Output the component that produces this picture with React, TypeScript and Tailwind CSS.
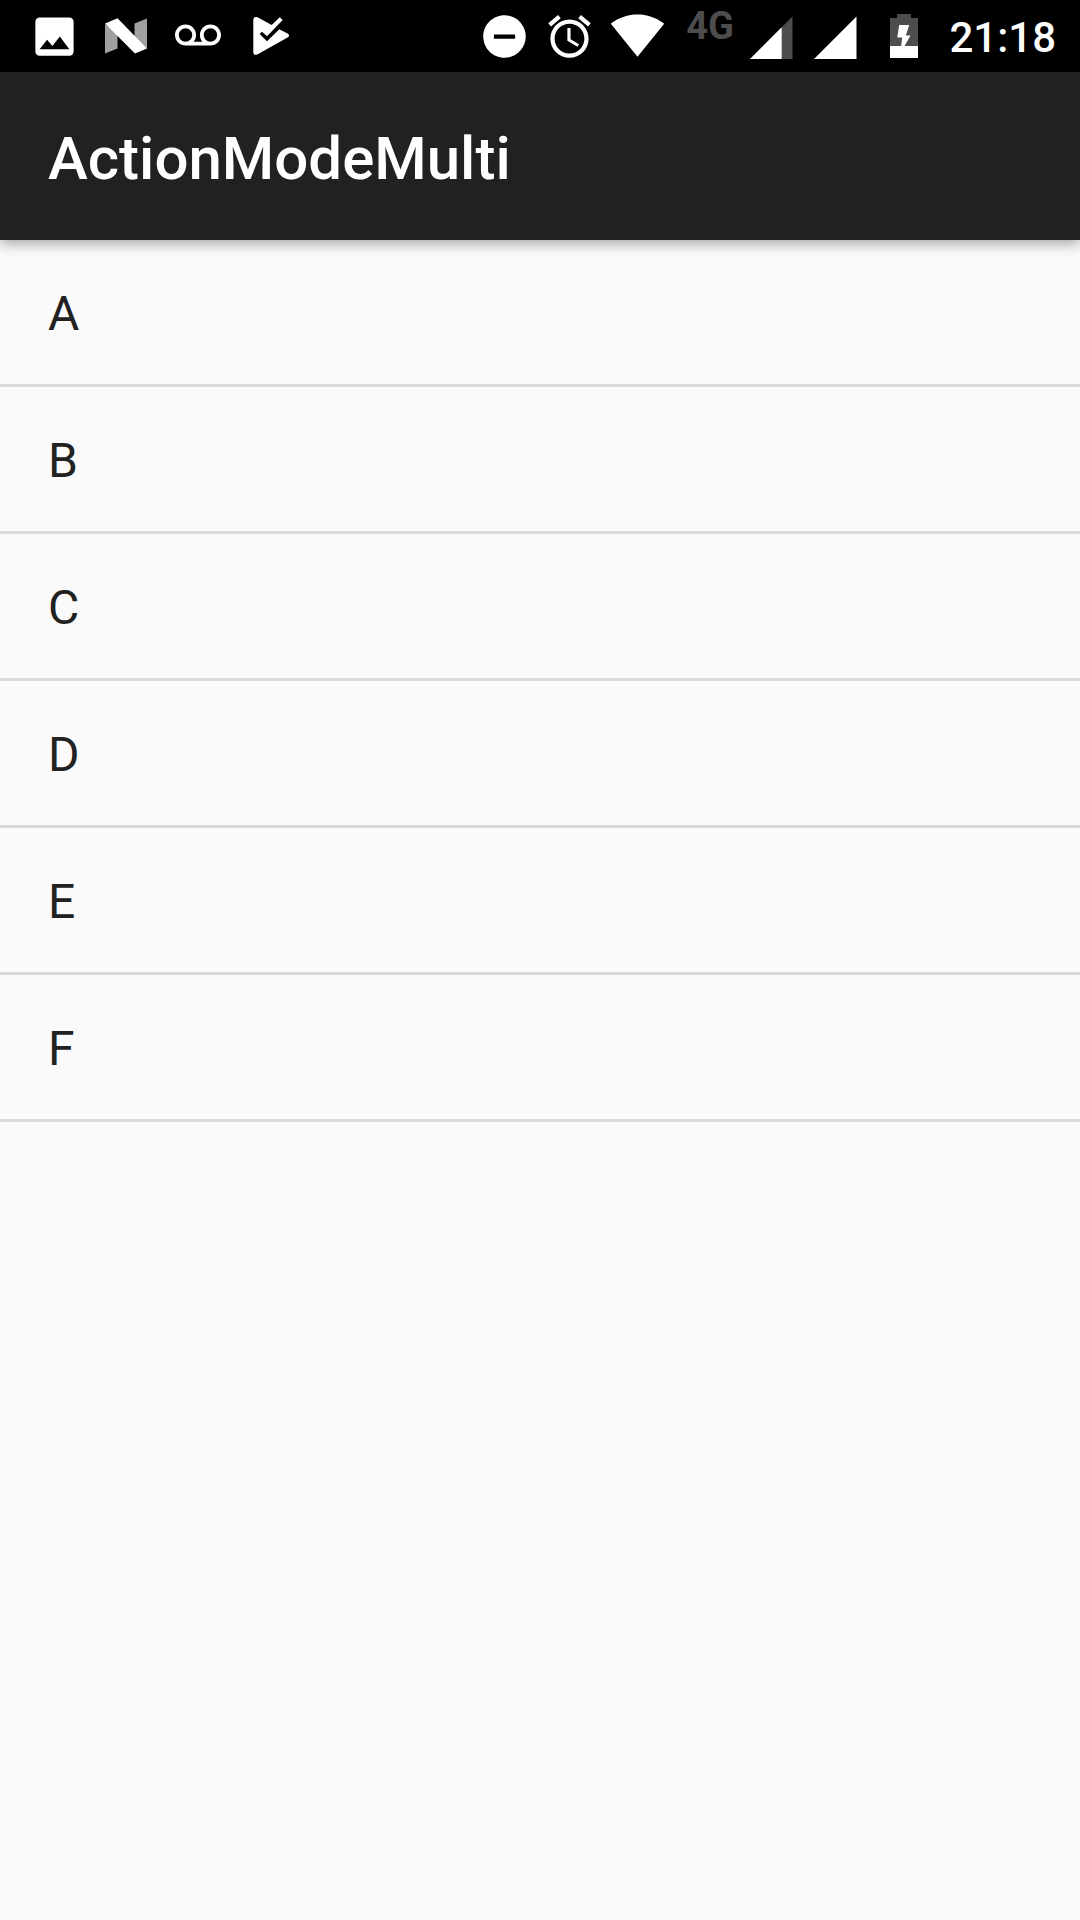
import React from "react";

const ROWS = ["A", "B", "C", "D", "E", "F"];

function PictureIcon() {
  return (
    <svg className="size-[51px]" viewBox="0 0 24 24" fill="currentColor" aria-hidden="true">
      <path d="M21 19V5c0-1.1-.9-2-2-2H5c-1.1 0-2 .9-2 2v14c0 1.1.9 2 2 2h14c1.1 0 2-.9 2-2zM8.5 13.5l2.5 3.01L14.5 12l4.5 6H5l3.5-4.5z" />
    </svg>
  );
}

function NougatIcon() {
  return (
    <svg className="size-[72px]" viewBox="0 0 72 72" aria-hidden="true">
      <path d="M15 24l12.500 10V48.500L15 53.500zM57 18.500L44.500 23.500V38L57 48.500z" fill="#a0a0a0" />
      <path d="M15 23.500L27.500 18.300 57 48.500 45 53.500z" fill="#fff" />
    </svg>
  );
}

function VoicemailIcon() {
  return (
    <svg className="size-[46px]" viewBox="0 0 24 24" fill="currentColor" aria-hidden="true">
      <path d="M18.5 6C15.46 6 13 8.46 13 11.5c0 1.33.47 2.55 1.26 3.5H9.74c.79-.95 1.26-2.17 1.26-3.5C11 8.46 8.54 6 5.5 6S0 8.46 0 11.5 2.46 17 5.5 17h13c3.04 0 5.5-2.46 5.5-5.5S21.54 6 18.5 6zm-13 9C3.57 15 2 13.43 2 11.5S3.57 8 5.5 8 9 9.57 9 11.5 7.43 15 5.5 15zm13 0c-1.93 0-3.5-1.57-3.5-3.5S16.57 8 18.5 8 22 9.57 22 11.5 20.43 15 18.5 15z" />
    </svg>
  );
}

function PlayCheckIcon() {
  return (
    <svg className="size-[72px]" viewBox="0 0 72 72" fill="currentColor" aria-hidden="true">
      <path d="M19.3 20.500Q19.300 16 23.500 17.300L37.700 25 45.700 17.300 48.700 20 33 36.300 28 31.700 25.700 34 33 41.300 45.300 29.300 54 33.700Q56 35.300 54 37.300L23.700 54.300Q19.300 56 19.300 52z" />
    </svg>
  );
}

function DoNotDisturbIcon() {
  return (
    <svg className="size-[51px]" viewBox="0 0 24 24" fill="currentColor" aria-hidden="true">
      <path d="M12 2C6.48 2 2 6.48 2 12s4.48 10 10 10 10-4.48 10-10S17.52 2 12 2zm5 11H7v-2h10v2z" />
    </svg>
  );
}

function AlarmIcon() {
  return (
    <svg className="size-[51px]" viewBox="0 0 24 24" fill="currentColor" aria-hidden="true">
      <path d="M22 5.72l-4.6-3.86-1.29 1.53 4.6 3.86L22 5.72zM7.88 3.39L6.6 1.86 2 5.71l1.29 1.53 4.59-3.85zM12.5 8H11v6l4.75 2.85.75-1.23-4-2.37V8zM12 4c-4.97 0-9 4.03-9 9s4.02 9 9 9c4.97 0 9-4.03 9-9s-4.03-9-9-9zm0 16c-3.87 0-7-3.13-7-7s3.13-7 7-7 7 3.13 7 7-3.13 7-7 7z" />
    </svg>
  );
}

function WifiIcon() {
  return (
    <svg className="size-[55px]" viewBox="0 0.6 24 24" fill="currentColor" aria-hidden="true">
      <path d="M12.01 21.49L23.64 7c-.45-.34-4.93-4-11.64-4C5.28 3 .81 6.66.36 7l11.63 14.49.01.01.01-.01z" />
    </svg>
  );
}

function SignalIcon({ partial = false }: { partial?: boolean }) {
  return (
    <svg className="h-[72px] w-16" viewBox="0 0 64 72" aria-hidden="true">
      <path d="M10 59L52.5 16.500V59z" fill={partial ? "#4d4d4d" : "#fff"} />
      {partial && <path d="M10 59L41.700 27.300V59z" fill="#fff" />}
    </svg>
  );
}

function BatteryIcon() {
  return (
    <svg className="size-[72px]" viewBox="0 0 72 72" aria-hidden="true">
      <path d="M29 14h14v4h7v28H22V18h7z" fill="#4d4d4d" />
      <path d="M22 46h28v12H22z" fill="#fff" />
      <path d="M31.200 25H41.300L37.800 35.500H42.500L36 47H33L34.200 37.500H29.300z" fill="#fff" />
    </svg>
  );
}

function Slot({ className, children }: { className: string; children: React.ReactNode }) {
  return <span className={`flex h-full shrink-0 items-center justify-center ${className}`}>{children}</span>;
}

export default function App() {
  return (
    <div className="flex min-h-screen flex-col bg-[#fafafa] font-['Roboto',sans-serif] text-[#212121]">
      <div className="flex h-[72px] justify-between bg-black text-white">
        <div className="flex pl-[18px]">
          <Slot className="w-[72px]"><PictureIcon /></Slot>
          <Slot className="w-[72px]"><NougatIcon /></Slot>
          <Slot className="w-[72px]"><VoicemailIcon /></Slot>
          <Slot className="w-[72px]"><PlayCheckIcon /></Slot>
        </div>
        <div className="flex">
          <Slot className="w-16"><DoNotDisturbIcon /></Slot>
          <Slot className="w-[66px]"><AlarmIcon /></Slot>
          <Slot className="w-[70px]"><WifiIcon /></Slot>
          <Slot className="w-[68px] pb-5 pl-2">
            <span className="text-[38px] leading-none font-bold text-[#4d4d4d]">4G</span>
          </Slot>
          <Slot className="w-16"><SignalIcon partial /></Slot>
          <Slot className="w-16"><SignalIcon /></Slot>
          <Slot className="w-[72px]"><BatteryIcon /></Slot>
          <time className="w-[140px] pt-1 pr-6 text-right text-[42px] leading-[68px] font-medium">21:18</time>
        </div>
      </div>
      <header className="relative flex h-[168px] items-center bg-[#212121] px-12 pt-1.5 shadow-[0_4px_12px_rgba(0,0,0,0.33)]">
        <h1 className="text-[60px] leading-none font-medium text-white">ActionModeMulti</h1>
      </header>
      <ul>
        {ROWS.map((row) => (
          <li key={row} className="flex h-[147px] items-center border-b-[3px] border-[#dadada] px-12 pt-1 text-[48px] leading-none">
            {row}
          </li>
        ))}
      </ul>
    </div>
  );
}
